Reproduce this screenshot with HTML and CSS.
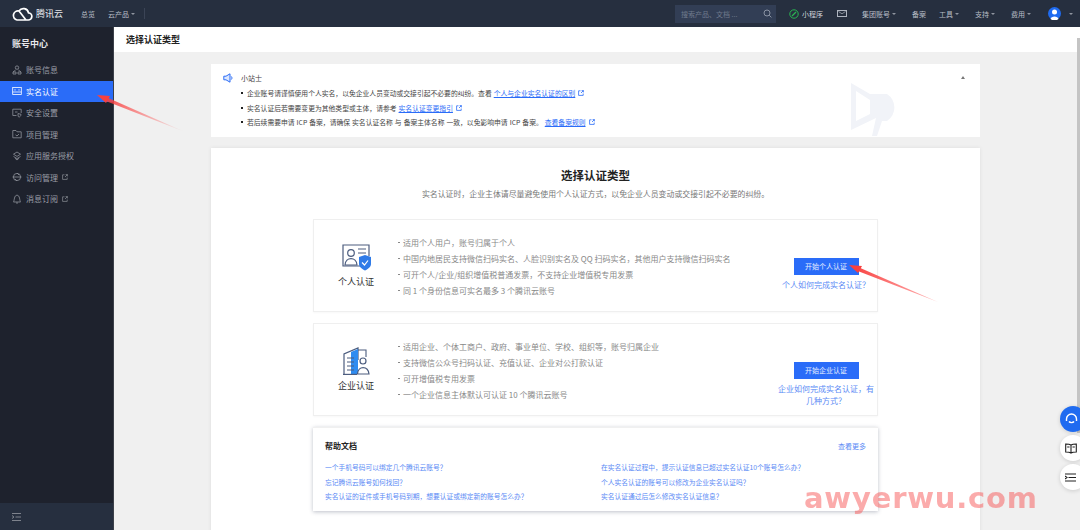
FILE: index.html
```html
<!DOCTYPE html>
<html lang="zh-CN">
<head>
    <meta charset="UTF-8">
    <title>选择认证类型</title>
    <link rel="stylesheet" href="styles.css">
</head>
<body>
    <header class="topbar">
        <div class="logo">
            <svg width="21" height="14" viewBox="0 0 21 14"><path d="M5 13 H16 A3.6 3.6 0 0 0 16.5 5.8 A5.2 5.2 0 0 0 7 4 A4.4 4.4 0 0 0 5 13 Z M7 4 L14 13" fill="none" stroke="#fff" stroke-width="1.7"/></svg>
            <span>腾讯云</span>
        </div>
        <a class="top-link overview">总览</a>
        <a class="top-link products">云产品<i class="caret"></i></a>
        <span class="top-divider"></span>
        <div class="top-right">
            <div class="search">
                <span>搜索产品、文档 ...</span>
                <svg width="9" height="9" viewBox="0 0 9 9"><circle cx="4" cy="4" r="3" fill="none" stroke="#8a93a3"/><path d="M6.2 6.2 L8.4 8.4" stroke="#8a93a3"/></svg>
            </div>
            <a class="top-link mini">
                <svg width="10" height="10" viewBox="0 0 10 10"><circle cx="5" cy="5" r="4.2" fill="none" stroke="#29b552"/><path d="M3 7 L7 3" stroke="#29b552" stroke-width="1.2"/></svg>
                小程序
            </a>
            <svg class="mail" width="10" height="7" viewBox="0 0 10 7"><rect x=".5" y=".5" width="9" height="6" fill="none" stroke="#aeb4bf"/><path d="M1.5 1.5 L5 3.8 L8.5 1.5" fill="none" stroke="#aeb4bf" stroke-width=".7"/></svg>
            <a class="top-link group">集团账号<i class="caret"></i></a>
            <a class="top-link record">备案</a>
            <a class="top-link tools">工具<i class="caret"></i></a>
            <a class="top-link support">支持<i class="caret"></i></a>
            <a class="top-link fee">费用<i class="caret"></i></a>
            <svg class="avatar" width="13" height="13" viewBox="0 0 13 13"><circle cx="6.5" cy="6.5" r="6.5" fill="#1f6bf0"/><circle cx="6.5" cy="5" r="2.5" fill="#fff"/><path d="M2.5 12 C3 8.5 10 8.5 10.5 12 A6.5 6.5 0 0 1 2.5 12 Z" fill="#fff"/></svg>
            <i class="caret"></i>
        </div>
    </header>

    <div class="layout">
        <aside class="sidebar">
            <h2 class="side-title">账号中心</h2>
            <nav class="side-nav">
                <a class="side-item">
                    <svg viewBox="0 0 10 10"><circle cx="5" cy="2.6" r="1.7"/><path d="M3.6 5 L1 7 V9 H4 V7 H1 M6.4 5 L9 7 V9 H6 V7 H9"/></svg>
                    账号信息
                </a>
                <a class="side-item active">
                    <svg viewBox="0 0 10 10"><rect x=".7" y="1.5" width="8.6" height="7"/><path d="M.7 6 H9.3 M3 3.2 V4.6 M7 3.2 V4.6"/></svg>
                    实名认证
                </a>
                <a class="side-item">
                    <svg viewBox="0 0 10 10"><path d="M.8 1.2 H9.2 V5 M.8 1.2 V7.5 H4.5"/><path d="M3 4 H5.5 M6 5.5 L9 6.3 C9 8 7.8 8.8 7 9.2 C6.2 8.8 6 8 6 5.5 Z"/></svg>
                    安全设置
                </a>
                <a class="side-item">
                    <svg viewBox="0 0 10 10"><path d="M.8 1.5 H4 L5 2.8 H9.2 V8.8 H.8 Z M3.5 5.8 L5 7 L7 5"/></svg>
                    项目管理
                </a>
                <a class="side-item">
                    <svg viewBox="0 0 10 10"><path d="M5 1 L8.5 3.2 L5 5.4 L1.5 3.2 Z M1.5 5.5 L5 7.6 L8.5 5.5 M3 7.2 L5 9 L7 7.2"/></svg>
                    应用服务授权
                </a>
                <a class="side-item">
                    <svg viewBox="0 0 10 10"><circle cx="5" cy="5" r="3.6"/><path d="M.5 5 H9.5 M5 1 L7 3 M5 9 L3 7"/></svg>
                    访问管理
                    <svg class="ext" viewBox="0 0 6 6"><path d="M2.5 .8 H.6 V5.4 H5.2 V3.5 M3 3 L5.4 .6 M3.6 .6 H5.4 V2.4"/></svg>
                </a>
                <a class="side-item">
                    <svg viewBox="0 0 10 10"><path d="M1.5 8 C2.5 6.5 2 1.2 5 1.2 C8 1.2 7.5 6.5 8.5 8 Z M4 9 H6"/></svg>
                    消息订阅
                    <svg class="ext" viewBox="0 0 6 6"><path d="M2.5 .8 H.6 V5.4 H5.2 V3.5 M3 3 L5.4 .6 M3.6 .6 H5.4 V2.4"/></svg>
                </a>
            </nav>
            <div class="side-foot">
                <svg width="9" height="8" viewBox="0 0 9 8"><path d="M0 .5 H9 M3.5 4 H9 M0 7.5 H9 M0 2.5 L2 4 L0 5.5" fill="none" stroke="#7d828c"/></svg>
            </div>
        </aside>

        <div class="content">
            <div class="page-head">选择认证类型</div>
            <main class="page-body">
                <section class="notice">
                    <svg class="notice-icon" width="10" height="10" viewBox="0 0 10 10"><path d="M.8 3.2 H3 L7 .8 V9.2 L3 6.8 H.8 Z" fill="#dce7ff" stroke="#2b6cf6"/><path d="M8.2 3.4 C9.2 4.3 9.2 5.7 8.2 6.6" fill="none" stroke="#2b6cf6"/></svg>
                    <div class="notice-text">
                        <h4>小站士</h4>
                        <ul>
                            <li>企业账号请谨慎使用个人实名，以免企业人员变动或交接引起不必要的纠纷。查看 <a>个人与企业实名认证的区别</a><svg class="ext-blue" viewBox="0 0 6 6"><path d="M2.5 .8 H.6 V5.4 H5.2 V3.5 M3 3 L5.4 .6 M3.6 .6 H5.4 V2.4"/></svg></li>
                            <li>实名认证后若需要变更为其他类型或主体，请参考 <a>实名认证变更指引</a><svg class="ext-blue" viewBox="0 0 6 6"><path d="M2.5 .8 H.6 V5.4 H5.2 V3.5 M3 3 L5.4 .6 M3.6 .6 H5.4 V2.4"/></svg></li>
                            <li>若后续需要申请 ICP 备案，请确保 实名认证名称 与 备案主体名称 一致，以免影响申请 ICP 备案。 <a>查看备案规则</a><svg class="ext-blue" viewBox="0 0 6 6"><path d="M2.5 .8 H.6 V5.4 H5.2 V3.5 M3 3 L5.4 .6 M3.6 .6 H5.4 V2.4"/></svg></li>
                        </ul>
                    </div>
                    <i class="notice-fold"></i>
                    <svg class="notice-mark" width="54" height="54" viewBox="0 0 54 54"><path d="M0 0 L19 11 H36 A16 16 0 0 1 36 38 H31 L26 53 H21 L25 35 L0 47 Z M5 8 V38 L19 31 V17 Z" fill="#f1f3f8" fill-rule="evenodd"/></svg>
                </section>

                <section class="main-card">
                    <h1 class="main-title">选择认证类型</h1>
                    <p class="main-sub">实名认证时，企业主体请尽量避免使用个人认证方式，以免企业人员变动或交接引起不必要的纠纷。</p>

                    <div class="type-card">
                        <div class="type-left">
                            <svg width="29" height="27" viewBox="0 0 29 27">
                                <path d="M19 22 H1 V1 H27 V12" fill="none" stroke="#4c5d7f" stroke-width="1.2"/>
                                <circle cx="9" cy="9" r="3.3" fill="none" stroke="#4c5d7f" stroke-width="1.2"/>
                                <path d="M3 21 C3.5 12.5 14.5 12.5 15 21 Z" fill="none" stroke="#4c5d7f" stroke-width="1.2"/>
                                <path d="M16 5 H24 M16 9 H24" stroke="#4c5d7f" stroke-width="1.2"/>
                                <path d="M17 13 L23 11 L29 13 V20 C29 23 26 25 23 26.5 C20 25 17 23 17 20 Z" fill="#2f7be8"/>
                                <path d="M20 18.5 L22.5 21 L26 16.5" fill="none" stroke="#fff" stroke-width="1.2"/>
                            </svg>
                            <span>个人认证</span>
                        </div>
                        <ul class="type-list">
                            <li>适用个人用户，账号归属于个人</li>
                            <li>中国内地居民支持微信扫码实名、人脸识别实名及 QQ 扫码实名，其他用户支持微信扫码实名</li>
                            <li>可开个人/企业/组织增值税普通发票，不支持企业增值税专用发票</li>
                            <li>同 1 个身份信息可实名最多 3 个腾讯云账号</li>
                        </ul>
                        <div class="type-action">
                            <a class="btn">开始个人认证</a>
                            <a class="type-help">个人如何完成实名认证？</a>
                        </div>
                    </div>

                    <div class="type-card">
                        <div class="type-left">
                            <svg width="28" height="28" viewBox="0 0 28 28">
                                <path d="M16 3 H24 V10" fill="none" stroke="#4c5d7f" stroke-width="1.1"/>
                                <path d="M2 27 V7 L16 1 V13" fill="none" stroke="#4c5d7f" stroke-width="1.2"/>
                                <path d="M9 5 L16 2 V27 H9 Z" fill="#2f8cf0"/>
                                <path d="M5 11 H12 M5 15 H12 M5 19 H12 M5 23 H12" stroke="#4c5d7f" stroke-width="1"/>
                                <path d="M1 27.4 H15" stroke="#4c5d7f" stroke-width="1.2"/>
                                <circle cx="21" cy="14" r="3" fill="#fff" stroke="#4c5d7f" stroke-width="1.2"/>
                                <path d="M15.5 27 C16 18.5 26 18.5 27 27 Z" fill="none" stroke="#4c5d7f" stroke-width="1.2"/>
                            </svg>
                            <span>企业认证</span>
                        </div>
                        <ul class="type-list">
                            <li>适用企业、个体工商户、政府、事业单位、学校、组织等，账号归属企业</li>
                            <li>支持微信公众号扫码认证、充值认证、企业对公打款认证</li>
                            <li>可开增值税专用发票</li>
                            <li>一个企业信息主体默认可认证 10 个腾讯云账号</li>
                        </ul>
                        <div class="type-action">
                            <a class="btn">开始企业认证</a>
                            <a class="type-help">企业如何完成实名认证，有几种方式？</a>
                        </div>
                    </div>

                    <div class="help-card">
                        <div class="help-head">
                            <h3>帮助文档</h3>
                            <a>查看更多</a>
                        </div>
                        <div class="help-grid">
                            <a>一个手机号码可以绑定几个腾讯云账号？</a>
                            <a>在实名认证过程中，提示认证信息已超过实名认证10个账号怎么办？</a>
                            <a>忘记腾讯云账号如何找回？</a>
                            <a>个人实名认证的账号可以修改为企业实名认证吗？</a>
                            <a>实名认证的证件或手机号码到期，想要认证或绑定新的账号怎么办？</a>
                            <a>实名认证通过后怎么修改实名认证信息？</a>
                        </div>
                    </div>
                </section>
            </main>
        </div>
    </div>

    <!-- floating tools -->
    <div class="float-tools">
        <span class="float-btn blue">
            <svg width="13" height="13" viewBox="0 0 13 13"><path d="M1.5 8 V6 A5 5 0 0 1 11.5 6 V8 M4 8.5 C5 10 8 10 9 8.5" fill="none" stroke="#fff" stroke-width="1.4"/></svg>
        </span>
        <span class="float-btn">
            <svg width="12" height="11" viewBox="0 0 12 11"><path d="M6 2 C4.5 1 2.5 1 .7 1 V9 C2.5 9 4.5 9 6 10 C7.5 9 9.5 9 11.3 9 V1 C9.5 1 7.5 1 6 2 Z M6 2 V10 M2.2 4 H4.5 M7.5 4 H9.8" fill="none" stroke="#222" stroke-width="1.1"/></svg>
        </span>
        <span class="float-btn">
            <svg width="11" height="9" viewBox="0 0 11 9"><path d="M0 1 H11 M3.5 4.5 H11 M0 8 H11 M0 3 L2 4.5 L0 6" fill="none" stroke="#222" stroke-width="1.1"/></svg>
        </span>
    </div>

    <div class="scrollbar"></div>

    <!-- annotations on the screenshot -->
    <svg class="arrows" width="1080" height="530" viewBox="0 0 1080 530">
        <defs>
            <linearGradient id="tailA" x1="185" y1="132" x2="98" y2="96" gradientUnits="userSpaceOnUse">
                <stop offset="0" stop-color="#ff4a4a" stop-opacity="0"/>
                <stop offset="1" stop-color="#f8403f"/>
            </linearGradient>
            <linearGradient id="tailB" x1="938" y1="302" x2="852" y2="267" gradientUnits="userSpaceOnUse">
                <stop offset="0" stop-color="#ff4a4a" stop-opacity=".4"/>
                <stop offset="1" stop-color="#f8403f"/>
            </linearGradient>
        </defs>
        <path d="M185 132 L106 97 L104.5 100.5 Z" fill="url(#tailA)"/>
        <path d="M97 95 L110 96 L106 103 Z" fill="#f8403f"/>
        <path d="M938 302 L858 267 L856.5 270.5 Z" fill="url(#tailB)"/>
        <path d="M849 265 L862 266 L858 273 Z" fill="#f8403f"/>
    </svg>
    <div class="watermark">awyerwu.com</div>
</body>
</html>
```

FILE: styles.css
```css
/* General */
* {
    box-sizing: border-box;
}

html, body {
    height: 530px;
}

body {
    margin: 0;
    overflow: hidden;
    font-family: "Noto Sans CJK SC", "Noto Sans", sans-serif;
    font-size: 7px;
    color: #444;
    background: #f0f0f0;
}

ul {
    list-style: none;
    margin: 0;
    padding: 0;
}

h1, h2, h3, h4, p {
    margin: 0;
}

/* Top bar */
.topbar {
    height: 27px;
    display: flex;
    align-items: center;
    padding-left: 12px;
    background: #262f3f;
    color: #b8bdc6;
}

.logo {
    width: 69px;
    display: flex;
    align-items: center;
    gap: 3px;
    color: #e8eaee;
    font-size: 9px;
}

.top-link {
    display: flex;
    align-items: center;
    white-space: nowrap;
    line-height: 10px;
}

.overview {
    width: 27px;
}

.products {
    width: 36px;
}

.caret {
    display: inline-block;
    margin-left: 2px;
    border-left: 2px solid transparent;
    border-right: 2px solid transparent;
    border-top: 2.5px solid #8f95a0;
}

.top-divider {
    width: 1px;
    height: 11px;
    background: #3b4456;
}

.top-right {
    margin-left: auto;
    display: flex;
    align-items: center;
    padding-right: 7px;
}

.search {
    width: 101px;
    height: 18px;
    margin-right: 13px;
    padding: 0 4px 0 6px;
    display: flex;
    align-items: center;
    justify-content: space-between;
    background: #323e55;
    color: #6f7a8d;
}

.mini {
    width: 48px;
    gap: 3px;
    color: #cfd3da;
}

.mail {
    margin-right: 15px;
}

.group {
    width: 50px;
}

.record {
    width: 27px;
}

.tools,
.support {
    width: 36px;
}

.fee {
    width: 37px;
}

.avatar {
    margin-right: 6px;
}

/* Page layout */
.layout {
    height: 503px;
    display: flex;
}

.sidebar {
    width: 114px;
    display: flex;
    flex-direction: column;
    background: #1e222d;
    border-right: 1px solid #3c4049;
    color: #9a9ea6;
}

.side-title {
    height: 32px;
    padding: 10px 0 0 12px;
    color: #e6e7ea;
    font-size: 9px;
    line-height: 13px;
}

.side-nav {
    flex: 1;
}

.side-item {
    height: 21.5px;
    padding-left: 12px;
    display: flex;
    align-items: center;
    font-size: 8px;
}

.side-item > svg:first-child {
    width: 10px;
    height: 10px;
    margin-right: 4px;
    fill: none;
    stroke: #8e929a;
    stroke-width: .8;
}

.side-item.active {
    background: #2a6cf8;
    color: #fff;
}

.side-item.active > svg:first-child {
    stroke: #fff;
}

.ext {
    width: 6px;
    height: 6px;
    margin-left: 4px;
    fill: none;
    stroke: #8e929a;
    stroke-width: .7;
}

.side-foot {
    height: 27px;
    padding-left: 12px;
    display: flex;
    align-items: center;
    background: #262f3f;
}

.content {
    flex: 1;
    min-width: 0;
    display: flex;
    flex-direction: column;
}

.page-head {
    height: 25px;
    padding-left: 12px;
    display: flex;
    align-items: center;
    background: #fff;
    color: #222;
    font-size: 9px;
    font-weight: 700;
}

.page-body {
    flex: 1;
    min-height: 0;
    padding: 12px 100px 0 97px;
    overflow: hidden;
}

/* Notice */
.notice {
    position: relative;
    height: 73px;
    padding: 9px 12px 0 12px;
    display: flex;
    gap: 8px;
    background: #fff;
    overflow: hidden;
}

.notice-text h4 {
    height: 11px;
    margin-bottom: 4px;
    font-size: 7px;
    font-weight: 400;
    line-height: 11px;
    color: #444;
}

.notice-text li {
    position: relative;
    height: 14.7px;
    padding-left: 6px;
    font-size: 6.8px;
    line-height: 11px;
    word-spacing: .5px;
    white-space: nowrap;
}

.notice-text li::before {
    content: "";
    position: absolute;
    left: 0;
    top: 4px;
    width: 2px;
    height: 2px;
    background: #222;
}

.notice-text a {
    color: #2a6cf8;
    text-decoration: underline;
}

.ext-blue {
    width: 6px;
    height: 6px;
    margin-left: 3px;
    fill: none;
    stroke: #2a6cf8;
    stroke-width: .8;
}

.notice-fold {
    position: absolute;
    right: 15px;
    top: 12px;
    border-left: 2.5px solid transparent;
    border-right: 2.5px solid transparent;
    border-bottom: 3px solid #777;
}

.notice-mark {
    position: absolute;
    left: 640px;
    top: 19px;
}

/* Main card */
.main-card {
    height: 420px;
    margin-top: 11px;
    padding: 20px 102px 0;
    background: #fff;
    box-shadow: 0 0 4px rgba(0, 0, 0, .08);
}

.main-title {
    color: #222;
    font-size: 11.5px;
    line-height: 14px;
    text-align: center;
}

.main-sub {
    margin: 5px 0 19px;
    color: #777;
    font-size: 7.9px;
    line-height: 13px;
    text-align: center;
    white-space: nowrap;
}

.type-card {
    height: 93px;
    margin-bottom: 11px;
    display: flex;
    align-items: center;
    border: 1px solid #efefef;
    box-shadow: 0 1px 2px rgba(0, 0, 0, .03);
}

.type-left {
    width: 84px;
    display: flex;
    flex-direction: column;
    align-items: center;
    gap: 5px;
    color: #333;
    font-size: 9px;
    line-height: 12px;
}

.type-list {
    flex: 1;
    min-width: 0;
    padding-top: 2px;
}

.type-list li {
    position: relative;
    height: 16px;
    padding-left: 5px;
    color: #888;
    font-size: 8px;
    line-height: 16px;
    white-space: nowrap;
}

.type-list li::before {
    content: "";
    position: absolute;
    left: 0;
    top: 7px;
    width: 1.5px;
    height: 1.5px;
    background: #888;
}

.type-action {
    width: 96px;
    margin: 37.5px 3px 0 0;
    align-self: flex-start;
    display: flex;
    flex-direction: column;
    align-items: center;
    gap: 4px;
}

.btn {
    width: 65px;
    height: 17px;
    display: flex;
    align-items: center;
    justify-content: center;
    background: #2a6cf8;
    color: #e8efff;
    font-size: 7px;
}

.type-help {
    color: #5a8af5;
    font-size: 8px;
    line-height: 12px;
    text-align: center;
}

/* Help card */
.help-card {
    height: 84px;
    padding: 12px 12px 0;
    background: #fff;
    border-top: 1px solid #f0f0f0;
    box-shadow: 0 1px 4px rgba(40, 50, 80, .3);
}

.help-head {
    height: 21px;
    display: flex;
    justify-content: space-between;
}

.help-head h3 {
    color: #222;
    font-size: 8px;
    line-height: 12px;
}

.help-head a {
    color: #5a8af5;
    line-height: 12px;
}

.help-grid {
    display: grid;
    grid-template-columns: 276px 1fr;
    grid-auto-rows: 14.6px;
    color: #5a8af5;
    font-size: 6.75px;
    line-height: 12px;
}

/* Floating tools */
.float-tools {
    position: fixed;
    z-index: 2;
    left: 1060px;
    top: 406px;
    display: flex;
    flex-direction: column;
    gap: 3px;
}

.float-btn {
    width: 26px;
    height: 26px;
    padding-left: 5px;
    display: flex;
    align-items: center;
    border-radius: 50%;
    background: #fff;
    box-shadow: 0 1px 4px rgba(0, 0, 0, .15);
}

.float-btn.blue {
    background: #1f6bf0;
}

.scrollbar {
    position: fixed;
    right: 0;
    top: 38px;
    width: 3px;
    height: 395px;
    background: #c4c4c4;
}

/* Annotations */
.arrows {
    position: fixed;
    z-index: 3;
    left: 0;
    top: 0;
    pointer-events: none;
}

.watermark {
    position: fixed;
    z-index: 3;
    left: 804px;
    top: 478px;
    color: rgba(246, 80, 80, .48);
    font-family: "DejaVu Sans", sans-serif;
    font-size: 29px;
    font-weight: 700;
    line-height: 40px;
    letter-spacing: .8px;
    white-space: nowrap;
}
```
